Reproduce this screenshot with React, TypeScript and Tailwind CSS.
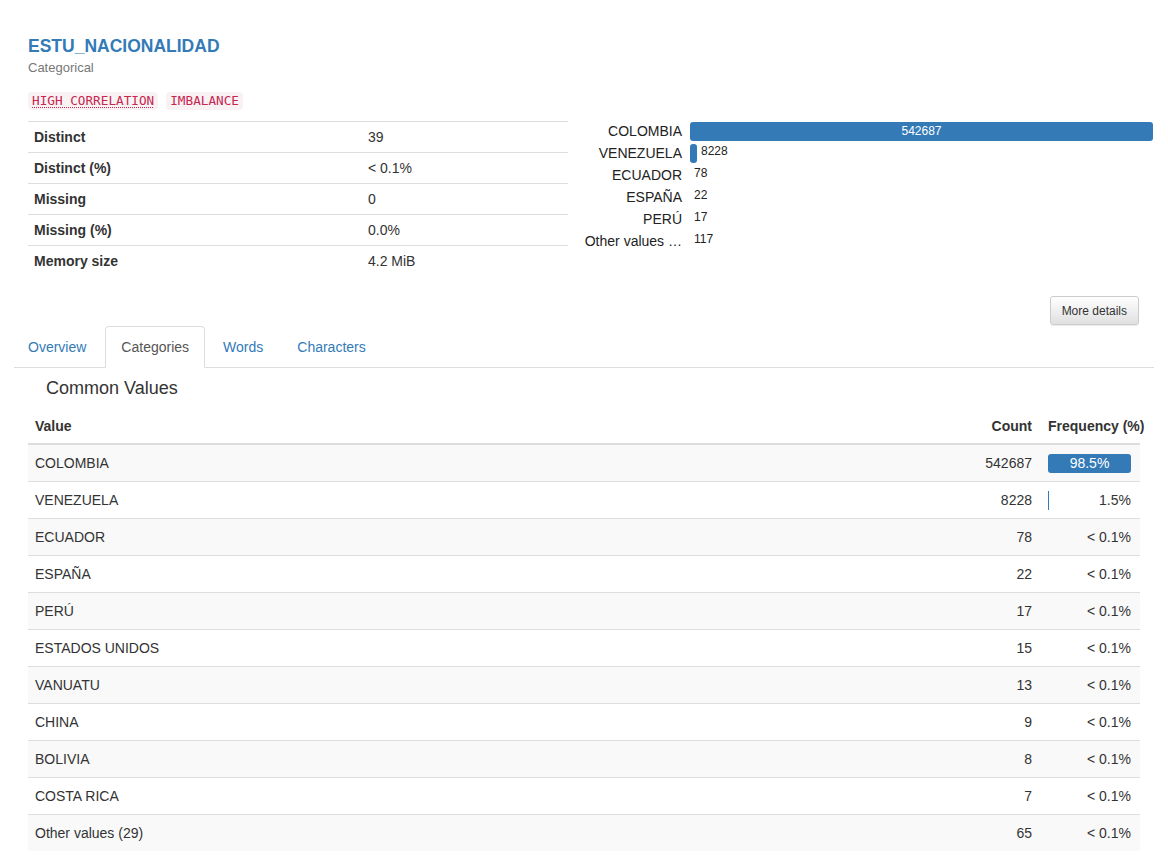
import React from 'react';

const stats = [
    ['Distinct', '39'],
    ['Distinct (%)', '< 0.1%'],
    ['Missing', '0'],
    ['Missing (%)', '0.0%'],
    ['Memory size', '4.2 MiB'],
];

const chart = [
    {label: 'COLOMBIA', count: 542687},
    {label: 'VENEZUELA', count: 8228},
    {label: 'ECUADOR', count: 78},
    {label: 'ESPAÑA', count: 22},
    {label: 'PERÚ', count: 17},
    {label: 'Other values …', count: 117},
];

const common = [
    ['COLOMBIA', '542687', '98.5%', 98.5],
    ['VENEZUELA', '8228', '1.5%', 1.5],
    ['ECUADOR', '78', '< 0.1%', 0],
    ['ESPAÑA', '22', '< 0.1%', 0],
    ['PERÚ', '17', '< 0.1%', 0],
    ['ESTADOS UNIDOS', '15', '< 0.1%', 0],
    ['VANUATU', '13', '< 0.1%', 0],
    ['CHINA', '9', '< 0.1%', 0],
    ['BOLIVIA', '8', '< 0.1%', 0],
    ['COSTA RICA', '7', '< 0.1%', 0],
    ['Other values (29)', '65', '< 0.1%', 0],
] as [string, string, string, number][];

const tabs = ['Overview', 'Categories', 'Words', 'Characters'];

function App() {
    const max = 542687;

    return (
        <div className="w-[1168px] h-[855px] overflow-hidden bg-white text-[#333] px-[14px] pt-[34px]"
             style={{fontFamily: '"Liberation Sans", Arial, sans-serif'}}>
            <div className="px-[14px]">
                <div className="text-[17.5px] leading-[24px] font-bold text-[#337ab7]">ESTU_NACIONALIDAD</div>
                <div className="mt-[1px] text-[13px] leading-[18px] text-[#777]">Categorical</div>
                <div className="mt-[15px] flex gap-[8px]"
                     style={{fontFamily: '"DejaVu Sans Mono", monospace'}}>
                    <span className="h-[18px] leading-[18px] px-[4px] rounded-[4px] bg-[#f9f2f4] text-[#c7254e] text-[12.7px] underline decoration-dotted decoration-1 underline-offset-2">
                        HIGH CORRELATION
                    </span>
                    <span className="h-[18px] leading-[18px] px-[4px] rounded-[4px] bg-[#f9f2f4] text-[#c7254e] text-[12.7px]">
                        IMBALANCE
                    </span>
                </div>

                <div className="mt-[11px] flex">
                    <table className="w-[540px] border-collapse text-[14px]">
                        <tbody>
                        {stats.map(([k, v], i) => (
                            <tr key={i} className="border-t border-[#ddd]">
                                <th className="w-[335px] text-left font-bold px-[6px] py-[5px] leading-[20px]">{k}</th>
                                <td className="px-[5px] py-[5px] leading-[20px]">{v}</td>
                            </tr>
                        ))}
                        </tbody>
                    </table>

                    <div className="ml-[15px] flex-1 -mt-[1px] mr-[-13px]">
                        {chart.map((r, i) => (
                            <div key={i} className="flex h-[22px] items-center">
                                <div className="w-[99px] text-right text-[14px] text-[#222] whitespace-nowrap">{r.label}</div>
                                <div className="flex-1 ml-[8px] flex items-center h-[22px]">
                                    {r.count === max ? (
                                        <div className="w-full h-[19px] rounded-[3px] bg-[#337ab7] text-white text-[12px] flex items-center justify-center">
                                            {r.count}
                                        </div>
                                    ) : (
                                        <>
                                            {r.count > 1000 && (
                                                <div className="h-[19px] rounded-[3px] bg-[#337ab7] mt-[1px]"
                                                     style={{width: `${(r.count / max) * 100}%`}}/>
                                            )}
                                            <span className="ml-[4px] text-[12px] text-[#222] -mt-[4px]">{r.count}</span>
                                        </>
                                    )}
                                </div>
                            </div>
                        ))}
                    </div>
                </div>

                <div className="mt-[20px] flex justify-end mr-[1px]">
                    <button className="h-[29px] px-[11px] text-[12px] text-[#333] rounded-[3px] border border-[#ccc] bg-gradient-to-b from-white to-[#e0e0e0] shadow-[0_1px_1px_rgba(0,0,0,0.08)]">
                        More details
                    </button>
                </div>
            </div>

            <div className="mt-[1px] flex border-b border-[#ddd] text-[14px]">
                {tabs.map((t, i) => (
                    <div key={i}
                         className={(i === 0 ? '-ml-[2px] mr-[3px] ' : 'mr-[2px] ') + (i === 1
                             ? '-mb-[1px] px-[15px] pt-[10px] pb-[9px] leading-[20px] border border-[#ddd] border-b-white rounded-t-[4px] bg-white text-[#555]'
                             : 'px-[15px] pt-[10px] pb-[9px] leading-[20px] border border-transparent text-[#337ab7]')}>
                        {t}
                    </div>
                ))}
            </div>

            <div className="px-[14px]">
                <div className="mt-[9px] ml-[18px] text-[18px] leading-[22px] text-[#333]">Common Values</div>
                <table className="mt-[9px] w-[1112px] border-collapse text-[14px]">
                    <thead>
                    <tr className="border-b-2 border-[#ddd]">
                        <th className="text-left font-bold px-[7px] pt-[8px] pb-[7px] leading-[20px]">Value</th>
                        <th className="w-[80px] text-right font-bold px-[8px] pt-[8px] pb-[7px] leading-[20px]">Count</th>
                        <th className="w-[100px] text-left font-bold pl-[8px] pt-[8px] pb-[7px] leading-[20px] whitespace-nowrap">
                            <span className="-mr-[10px]">Frequency (%)</span>
                        </th>
                    </tr>
                    </thead>
                    <tbody>
                    {common.map(([v, c, f, p], i) => (
                        <tr key={i} className={(i % 2 === 0 ? 'bg-[#f9f9f9] ' : '') + 'border-t border-[#ddd]'}>
                            <td className="px-[7px] py-[8px] leading-[20px]">{v}</td>
                            <td className="text-right px-[8px] py-[8px] leading-[20px]">{c}</td>
                            <td className="pl-[8px] pr-[9px] py-[8px] leading-[20px]">
                                {p > 50 ? (
                                    <div className="h-[19px] rounded-[3px] bg-[#337ab7] text-white text-center leading-[19px]">{f}</div>
                                ) : p > 0 ? (
                                    <div className="flex h-[19px] items-center">
                                        <div className="w-[1px] h-[19px] bg-[#337ab7]"/>
                                        <span className="flex-1 text-right">{f}</span>
                                    </div>
                                ) : (
                                    <div className="text-right">{f}</div>
                                )}
                            </td>
                        </tr>
                    ))}
                    </tbody>
                </table>
            </div>
        </div>
    );
}

export default App;
